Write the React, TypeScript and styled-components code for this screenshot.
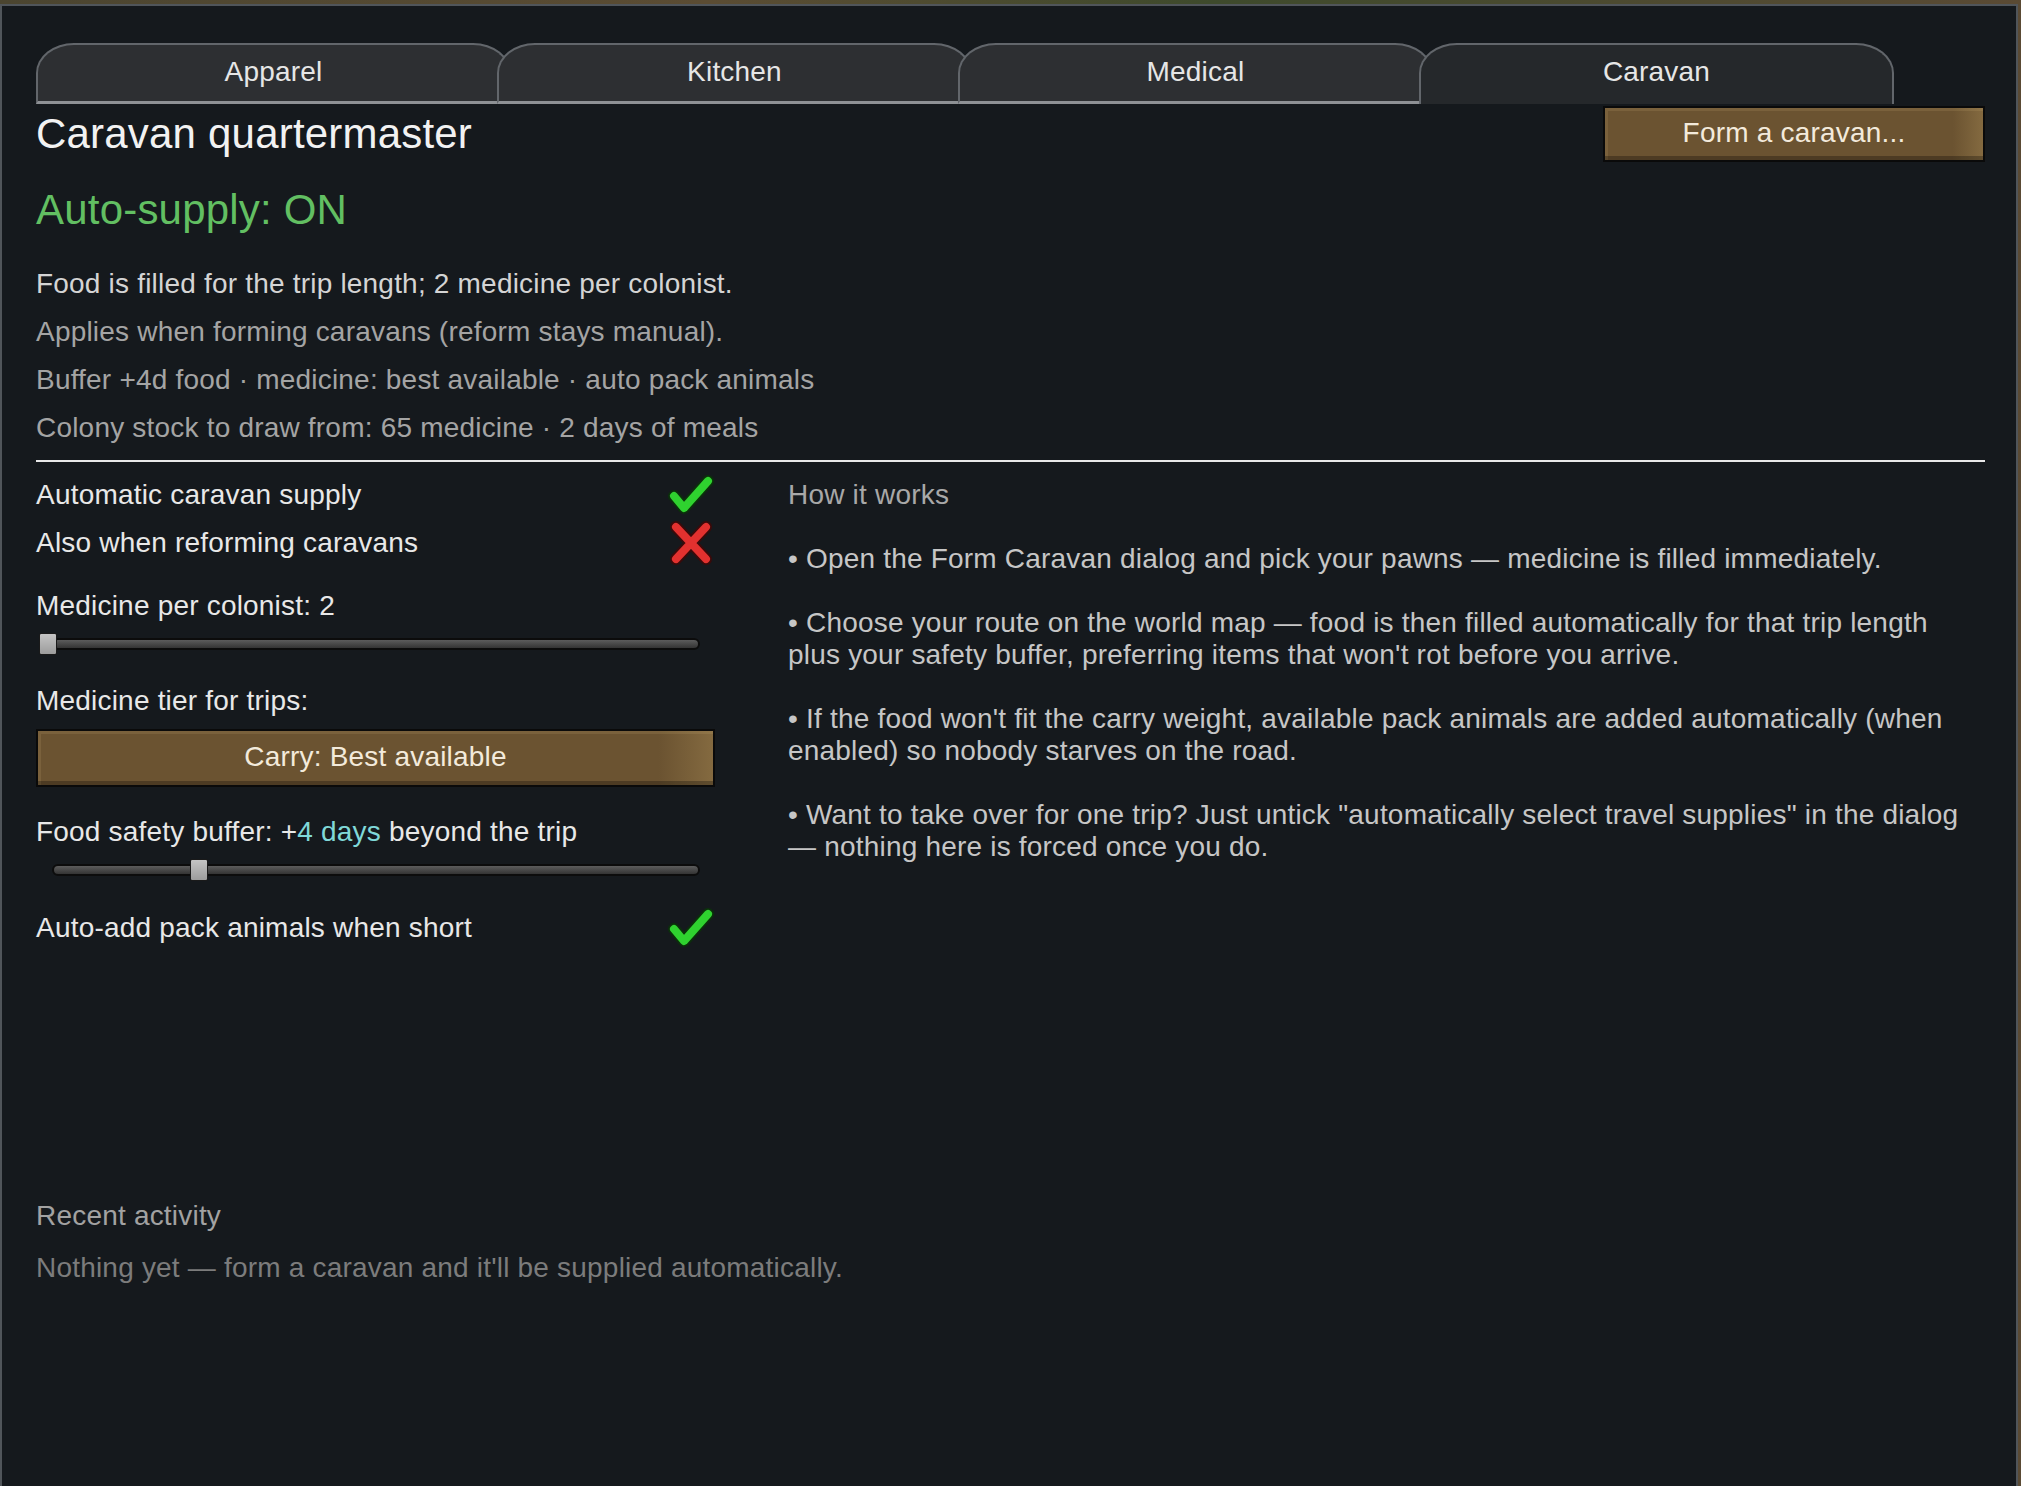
import React from 'react';
import styled, { createGlobalStyle } from 'styled-components';

const colors = {
  panel: '#15191d',
  panelEdge: '#50555a',
  tabFill: '#2d2f32',
  tabActive: '#25282b',
  tabEdge: '#62666b',
  tabBase: '#8e9195',
  text: '#e8e8e8',
  soft: '#a8a8a8',
  dim: '#7c7c7c',
  green: '#62bf62',
  teal: '#80d8d8',
  brown: '#6b5331',
};

const GlobalStyle = createGlobalStyle`
  html, body {
    margin: 0;
    padding: 0;
    background: linear-gradient(90deg, #4b4530 0%, #5b4c33 35%, #3e4a2c 60%, #5a4a34 100%);
  }
  body {
    font-family: 'Liberation Sans', Arial, sans-serif;
  }
`;

const Window = styled.div`
  margin: 4px 3px 0 0;
  min-height: calc(100vh - 4px);
  box-sizing: border-box;
  background-color: ${colors.panel};
  border: 2px solid ${colors.panelEdge};
  border-bottom: none;
  padding: 37px 31px 40px 34px;
  color: ${colors.text};
  font-size: 28px;
  letter-spacing: 0.2px;
`;

const TabStrip = styled.nav`
  display: flex;
  height: 61px;
`;

// tabs overlap a little, later ones drawn over the previous tab's curve
const Tab = styled.div<{ $active?: boolean }>`
  position: relative;
  width: 475px;
  height: 61px;
  box-sizing: border-box;
  margin-left: -14px;
  &:first-child {
    margin-left: 0;
  }
  background-color: ${p => (p.$active ? colors.tabActive : colors.tabFill)};
  border: 2px solid ${colors.tabEdge};
  border-bottom: ${p => (p.$active ? 'none' : `3px solid ${colors.tabBase}`)};
  border-radius: 38px 38px 0 0 / 30px 30px 0 0;
  display: flex;
  justify-content: center;
  align-items: center;
  padding-bottom: ${p => (p.$active ? '5px' : '2px')};
  color: #e6e6e6;
  font-size: 28px;
`;

const HeaderRow = styled.div`
  display: flex;
  justify-content: space-between;
  align-items: flex-start;
  margin-top: 2px;
`;

const Title = styled.h1`
  margin: 0;
  font-size: 42px;
  font-weight: normal;
  line-height: 56px;
  color: #f2f2f2;
`;

const BrownButton = styled.button<{ $wide?: boolean }>`
  width: ${p => (p.$wide ? '100%' : '382px')};
  height: ${p => (p.$wide ? '58px' : '56px')};
  box-sizing: border-box;
  border: 2px solid #0a0a0a;
  background: linear-gradient(90deg, ${colors.brown} 0%, ${colors.brown} 92%, #846a40 100%);
  box-shadow: inset 0 -4px 0 rgba(0, 0, 0, 0.28), inset 3px 3px 0 rgba(255, 225, 160, 0.1);
  color: #f3eadb;
  font-family: inherit;
  font-size: 28px;
  letter-spacing: 0.2px;
  cursor: pointer;
  padding: 0 0 2px 0;
`;

const Status = styled.div`
  margin-top: 20px;
  font-size: 42px;
  line-height: 56px;
  color: ${colors.green};
`;

const Summary = styled.div`
  margin-top: 22px;
`;

const SummaryLine = styled.div<{ $bright?: boolean }>`
  line-height: 48px;
  color: ${p => (p.$bright ? '#d4d4d4' : '#a4a4a4')};
`;

const Divider = styled.hr`
  margin: 8px 0 0 0;
  border: none;
  height: 2px;
  background-color: #e8e8e8;
`;

const Columns = styled.div`
  display: grid;
  grid-template-columns: 679px 1fr;
  column-gap: 73px;
  margin-top: 9px;
`;

const Column = styled.div`
  display: flex;
  flex-direction: column;
`;

const ToggleRow = styled.div<{ $gap?: number }>`
  display: flex;
  justify-content: space-between;
  align-items: center;
  height: 48px;
  margin-top: ${p => p.$gap ?? 0}px;
`;

const FieldLabel = styled.div<{ $gap: number }>`
  line-height: 40px;
  margin-top: ${p => p.$gap}px;
`;

const Accent = styled.span`
  color: ${colors.teal};
`;

const ButtonSlot = styled.div`
  margin-top: 8px;
`;

const SliderBox = styled.div`
  position: relative;
  height: 24px;
  margin-top: 6px;
`;

const SliderTrack = styled.div`
  position: absolute;
  left: 16px;
  right: 15px;
  top: 6px;
  height: 12px;
  box-sizing: border-box;
  border: 2px solid #0c0c0c;
  border-radius: 6px;
  background: linear-gradient(#5c5c5c 0%, #4a4a4a 45%, #343434 100%);
`;

const SliderThumb = styled.div`
  position: absolute;
  top: 1px;
  width: 18px;
  height: 22px;
  box-sizing: border-box;
  border: 1px solid #1a1a1a;
  border-radius: 2px;
  background: linear-gradient(#c4c4c4, #9c9c9c);
`;

const HelpHeading = styled.div`
  line-height: 48px;
  color: ${colors.soft};
  margin-bottom: 24px;
`;

const Bullet = styled.p`
  margin: 0 0 32px 0;
  line-height: 32px;
  color: #c6c6c6;
`;

const Recent = styled.section`
  margin-top: 240px;
`;

const RecentHeading = styled.div`
  line-height: 48px;
  color: #a2a2a2;
`;

const RecentEmpty = styled.div`
  margin-top: 4px;
  line-height: 48px;
  color: ${colors.dim};
`;

function Check() {
  return (
    <svg width="48" height="42" viewBox="0 0 48 42">
      <polyline points="7,22 17,34 41,7" fill="none" stroke="#0b300b" strokeWidth="12" strokeLinecap="round" strokeLinejoin="round" />
      <polyline points="7,22 17,34 41,7" fill="none" stroke="#2fd22f" strokeWidth="8" strokeLinecap="round" strokeLinejoin="round" />
    </svg>
  );
}

function Cross() {
  return (
    <svg width="48" height="46" viewBox="0 0 48 46">
      <path d="M9 7 L39 39 M39 7 L9 39" fill="none" stroke="#3a0a0a" strokeWidth="12" strokeLinecap="round" />
      <path d="M9 7 L39 39 M39 7 L9 39" fill="none" stroke="#e2312f" strokeWidth="8" strokeLinecap="round" />
    </svg>
  );
}

function Slider({ value, min, max }: { value: number; min: number; max: number }) {
  const pct = (value - min) / (max - min);
  return (
    <SliderBox>
      <SliderTrack />
      <SliderThumb style={{ left: `${3 + pct * 640}px` }} />
    </SliderBox>
  );
}

const tabs = ['Apparel', 'Kitchen', 'Medical', 'Caravan'];

const howItWorks = [
  '• Open the Form Caravan dialog and pick your pawns — medicine is filled immediately.',
  '• Choose your route on the world map — food is then filled automatically for that trip length plus your safety buffer, preferring items that won\'t rot before you arrive.',
  '• If the food won\'t fit the carry weight, available pack animals are added automatically (when enabled) so nobody starves on the road.',
  '• Want to take over for one trip? Just untick "automatically select travel supplies" in the dialog — nothing here is forced once you do.',
];

export default function App() {
  return (
    <>
      <GlobalStyle />
      <Window>
        <TabStrip>
          {tabs.map(t => (
            <Tab key={t} $active={t === 'Caravan'}>{t}</Tab>
          ))}
        </TabStrip>

        <HeaderRow>
          <Title>Caravan quartermaster</Title>
          <BrownButton>Form a caravan...</BrownButton>
        </HeaderRow>

        <Status>Auto-supply: ON</Status>

        <Summary>
          <SummaryLine $bright>Food is filled for the trip length; 2 medicine per colonist.</SummaryLine>
          <SummaryLine>Applies when forming caravans (reform stays manual).</SummaryLine>
          <SummaryLine>Buffer +4d food · medicine: best available · auto pack animals</SummaryLine>
          <SummaryLine>Colony stock to draw from: 65 medicine · 2 days of meals</SummaryLine>
        </Summary>

        <Divider />

        <Columns>
          <Column>
            <ToggleRow>
              <span>Automatic caravan supply</span>
              <Check />
            </ToggleRow>
            <ToggleRow>
              <span>Also when reforming caravans</span>
              <Cross />
            </ToggleRow>

            <FieldLabel $gap={19}>Medicine per colonist: 2</FieldLabel>
            <Slider value={2} min={2} max={10} />

            <FieldLabel $gap={25}>Medicine tier for trips:</FieldLabel>
            <ButtonSlot>
              <BrownButton $wide>Carry: Best available</BrownButton>
            </ButtonSlot>

            <FieldLabel $gap={25}>
              Food safety buffer: +<Accent>4 days</Accent> beyond the trip
            </FieldLabel>
            <Slider value={4} min={0} max={17} />

            <ToggleRow $gap={22}>
              <span>Auto-add pack animals when short</span>
              <Check />
            </ToggleRow>
          </Column>

          <Column>
            <HelpHeading>How it works</HelpHeading>
            {howItWorks.map((line, i) => (
              <Bullet key={i}>{line}</Bullet>
            ))}
          </Column>
        </Columns>

        <Recent>
          <RecentHeading>Recent activity</RecentHeading>
          <RecentEmpty>Nothing yet — form a caravan and it'll be supplied automatically.</RecentEmpty>
        </Recent>
      </Window>
    </>
  );
}
